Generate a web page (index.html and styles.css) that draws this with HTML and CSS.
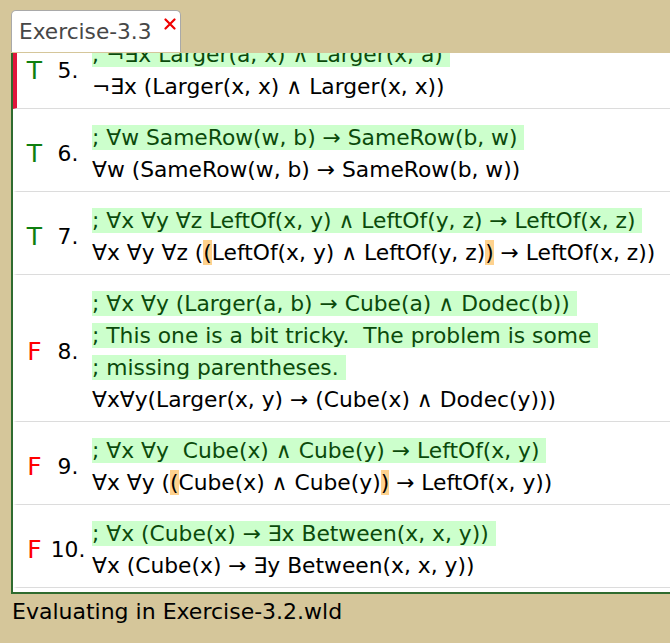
FILE: index.html
```html
<!DOCTYPE html>
<html>
<head>
<meta charset="utf-8">
<title>Exercise-3.3</title>
<link rel="stylesheet" href="styles.css">
</head>
<body>
<div class="app">
  <div class="tabs">
    <div class="tab">
      <span class="tab-title">Exercise-3.3</span>
      <svg class="close" width="12" height="12" viewBox="0 0 12 12"><path d="M1.5 1.5 L10.5 10.5 M10.5 1.5 L1.5 10.5" stroke="#f00000" stroke-width="2.2" stroke-linecap="round"/></svg>
    </div>
  </div>
  <div class="panel">
    <div class="list">
      <div class="row selected">
        <div class="truth t">T</div>
        <div class="num">5.</div>
        <div class="text">
          <div class="line"><span class="comment">; ¬∃x Larger(a, x) ∧ Larger(x, a) </span></div>
          <div class="line">¬∃x (Larger(x, x) ∧ Larger(x, x))</div>
        </div>
      </div>
      <div class="row">
        <div class="truth t">T</div>
        <div class="num">6.</div>
        <div class="text">
          <div class="line"><span class="comment">; ∀w SameRow(w, b) → SameRow(b, w) </span></div>
          <div class="line">∀w (SameRow(w, b) → SameRow(b, w))</div>
        </div>
      </div>
      <div class="row">
        <div class="truth t">T</div>
        <div class="num">7.</div>
        <div class="text">
          <div class="line"><span class="comment">; ∀x ∀y ∀z LeftOf(x, y) ∧ LeftOf(y, z) → LeftOf(x, z) </span></div>
          <div class="line">∀x ∀y ∀z (<span class="paren">(</span>LeftOf(x, y) ∧ LeftOf(y, z)<span class="paren">)</span> → LeftOf(x, z))</div>
        </div>
      </div>
      <div class="row">
        <div class="truth f">F</div>
        <div class="num">8.</div>
        <div class="text">
          <div class="line"><span class="comment">; ∀x ∀y (Larger(a, b) → Cube(a) ∧ Dodec(b)) </span></div>
          <div class="line"><span class="comment">; This one is a bit tricky.  The problem is some </span></div>
          <div class="line"><span class="comment">; missing parentheses. </span></div>
          <div class="line">∀x∀y(Larger(x, y) → (Cube(x) ∧ Dodec(y)))</div>
        </div>
      </div>
      <div class="row">
        <div class="truth f">F</div>
        <div class="num">9.</div>
        <div class="text">
          <div class="line"><span class="comment">; ∀x ∀y  Cube(x) ∧ Cube(y) → LeftOf(x, y) </span></div>
          <div class="line">∀x ∀y (<span class="paren">(</span>Cube(x) ∧ Cube(y)<span class="paren">)</span> → LeftOf(x, y))</div>
        </div>
      </div>
      <div class="row">
        <div class="truth f">F</div>
        <div class="num">10.</div>
        <div class="text">
          <div class="line"><span class="comment">; ∀x (Cube(x) → ∃x Between(x, x, y)) </span></div>
          <div class="line">∀x (Cube(x) → ∃y Between(x, x, y))</div>
        </div>
      </div>
    </div>
  </div>
  <div class="status">Evaluating in Exercise-3.2.wld</div>
</div>
</body>
</html>
```
FILE: styles.css
```css
html, body {
  margin: 0;
  padding: 0;
}
body {
  background: #d5c69a;
  font-family: "DejaVu Sans", sans-serif;
  color: #000;
  overflow: hidden;
}
.app {
  width: 670px;
  height: 643px;
  overflow: hidden;
}
.tabs {
  display: flex;
  padding: 10px 0 0 11px;
}
.tab {
  width: 170px;
  height: 42px;
  box-sizing: border-box;
  display: flex;
  align-items: flex-start;
  background: #fff;
  border: 1px solid #a9a9a9;
  border-bottom: none;
  border-radius: 5px 5px 0 0;
  padding: 8px 0 0 7px;
}
.tab-title {
  font-size: 21.7px;
  line-height: 25px;
  color: #474747;
}
.close {
  margin: -1px 0 0 12px;
  flex: none;
}
.panel {
  margin: 1px 0 0 11px;
  height: 539px;
  background: #fff;
  border-left: 2px solid #2f6b2f;
  border-bottom: 2px solid #2f6b2f;
  overflow: hidden;
}
.list {
  margin-top: -27px;
}
.row {
  display: flex;
  align-items: center;
  padding: 13px 0 5px;
  border-left: 4px solid #fff;
  border-bottom: 1px solid #dcdcdc;
}
.row.selected {
  border-left-color: #e0163c;
}
.truth {
  flex: none;
  width: 35px;
  display: flex;
  justify-content: center;
  font-size: 25px;
  line-height: 32px;
}
.truth.t { color: #0f7f0f; }
.truth.f { color: #ff0000; }
.num {
  flex: none;
  width: 32px;
  display: flex;
  justify-content: center;
  font-size: 21.8px;
  line-height: 32px;
}
.text {
  flex: none;
  margin-left: 8px;
  font-size: 21.8px;
  line-height: 32px;
}
.line {
  white-space: pre;
}
.comment {
  background: #ccffcc;
  color: #0b4a0b;
}
.paren {
  background: #fed28e;
}
.status {
  padding: 2px 0 0 12px;
  font-size: 22px;
  line-height: 32px;
  white-space: pre;
}
```
